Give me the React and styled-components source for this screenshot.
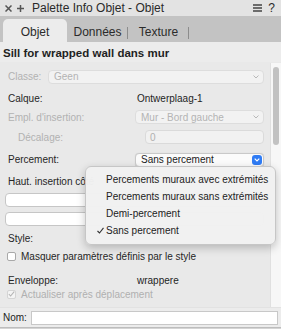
import styled, { createGlobalStyle } from 'styled-components';

const GlobalStyle = createGlobalStyle`
  html, body {
    margin: 0;
    padding: 0;
    background: #e9e9e9;
  }
  body {
    font-family: "Liberation Sans", Arial, sans-serif;
    color: #232323;
  }
`

const Panel = styled.div`
  width: 281px;
  height: 329px;
  display: flex;
  flex-direction: column;
  overflow: hidden;
  background: #e9e9e9;
`

const TitleBar = styled.div`
  height: 16px;
  display: flex;
  align-items: center;
  padding: 0 6px 0 5px;
  background: #e3e3e3;
  font-size: 12px;
  color: #2a2a2a;
  .btns {
    display: flex;
    gap: 5px;
    width: 27px;
    align-items: center;
  }
  .title {
    flex: 1;
  }
  .tools {
    display: flex;
    align-items: center;
    gap: 6px;
  }
`

const TabBar = styled.div`
  height: 26px;
  display: flex;
  align-items: flex-end;
  padding-left: 3px;
  background: #c3c3c3;
`

const Tab = styled.div`
  position: relative;
  width: ${(p) => (p.$active ? '64px' : '61px')};
  height: 23px;
  box-sizing: border-box;
  padding-top: 3px;
  display: flex;
  align-items: center;
  justify-content: center;
  font-size: 12px;
  color: #2b2b2b;
  background: ${(p) => (p.$active ? '#ececec' : 'transparent')};
  border-radius: 5px 5px 0 0;
  ${(p) => !p.$active && `
    &::after {
      content: '';
      position: absolute;
      right: 0;
      top: 8px;
      width: 1px;
      height: 12px;
      background: #8c8c8c;
    }
  `}
`

const Heading = styled.div`
  height: 20px;
  box-sizing: border-box;
  padding: 1px 0 0 3px;
  display: flex;
  align-items: center;
  background: #ececec;
  font-size: 11.5px;
  font-weight: bold;
  color: #1f1f1f;
`

const Content = styled.div`
  height: 245px;
  display: flex;
`

const Main = styled.div`
  flex: 1;
  display: flex;
  flex-direction: column;
  padding-top: 4px;
`

const Track = styled.div`
  width: 11px;
  margin-top: 1px;
  box-sizing: border-box;
  background: #f7f7f7;
  border-left: 1px solid #e0e0e0;
  padding: 4px 2px 0 2px;
`

const Thumb = styled.div`
  height: 78px;
  border-radius: 3px;
  background: #c2c2c2;
`

const Row = styled.div`
  position: relative;
  height: ${(p) => p.$h}px;
  display: flex;
  align-items: center;
  padding: 0 6px 0 ${(p) => p.$pl || 8}px;
  font-size: 10px;
`

const Label = styled.div`
  width: ${(p) => p.$w}px;
  flex-shrink: 0;
  white-space: nowrap;
  overflow: hidden;
  color: ${(p) => (p.$disabled ? '#b2b2b2' : '#262626')};
`

const Value = styled.div`
  padding-left: 2px;
  color: #1e1e1e;
`

const Popup = styled.div`
  flex: 1;
  height: 14px;
  box-sizing: border-box;
  display: flex;
  align-items: center;
  justify-content: space-between;
  padding: 0 1px 0 5px;
  border-radius: 4px;
  background: ${(p) => (p.$disabled ? '#f2f2f2' : '#fbfbfb')};
  border: 1px solid ${(p) => (p.$disabled ? '#dddddd' : '#c9c9c9')};
  color: ${(p) => (p.$disabled ? '#b4b4b4' : '#222')};
  box-shadow: ${(p) => (p.$disabled ? 'none' : '0 0.5px 1px rgba(0,0,0,0.12)')};
  .chev {
    margin-right: 3px;
  }
`

const BlueButton = styled.div`
  width: 10px;
  height: 10px;
  border-radius: 3px;
  background: #2f7cf5;
  display: flex;
  align-items: center;
  justify-content: center;
`

const Field = styled.div`
  flex: 1;
  height: 14px;
  box-sizing: border-box;
  display: flex;
  align-items: center;
  padding-left: 4px;
  border-radius: 4px;
  background: ${(p) => (p.$disabled ? '#f1f1f1' : '#ffffff')};
  border: 1px solid ${(p) => (p.$disabled ? '#dadada' : '#c6c6c6')};
  color: #b0b0b0;
`

const Check = styled.div`
  width: 9px;
  height: 9px;
  margin-right: 5px;
  box-sizing: border-box;
  border-radius: 2px;
  background: ${(p) => (p.$disabled ? '#f4f4f4' : '#ffffff')};
  border: 1px solid ${(p) => (p.$disabled ? '#d4d4d4' : '#a9a9a9')};
  display: flex;
  align-items: center;
  justify-content: center;
`

const CheckText = styled.div`
  color: ${(p) => (p.$disabled ? '#b0b0b0' : '#262626')};
`

const Menu = styled.div`
  position: absolute;
  top: 17px;
  left: 85px;
  width: 191px;
  height: 79px;
  box-sizing: border-box;
  padding-top: 4px;
  z-index: 5;
  background: rgba(241, 241, 241, 0.98);
  border: 1px solid #c6c6c6;
  border-radius: 6px;
  box-shadow: 0 3px 9px rgba(0, 0, 0, 0.22);
`

const MenuItem = styled.div`
  position: relative;
  height: 17px;
  display: flex;
  align-items: center;
  padding-left: 20px;
  font-size: 10px;
  color: #222;
  .tick {
    position: absolute;
    left: 11px;
    top: 5px;
  }
`

const NomBar = styled.div`
  height: 19px;
  display: flex;
  align-items: center;
  gap: 4px;
  padding: 0 3px;
  background: #ececec;
  font-size: 10px;
  border-top: 1px solid #e2e2e2;
`

const NomInput = styled.div`
  flex: 1;
  height: 14px;
  box-sizing: border-box;
  background: #fff;
  border: 1px solid #c8c8c8;
`

const BottomStrip = styled.div`
  flex: 1;
  background: #d4d4d4;
  border-top: 1px solid #bdbdbd;
`

const Chevron = ({ color = '#b8b8b8' }) => (
  <svg className="chev" width="6" height="4" viewBox="0 0 6 4">
    <polyline points="0.5,0.5 3,3 5.5,0.5" fill="none" stroke={color} strokeWidth="1" />
  </svg>
)

const menuItems = [
  'Percements muraux avec extrémités',
  'Percements muraux sans extrémités',
  'Demi-percement',
  'Sans percement',
]

const App = () => {
  return (
    <>
      <GlobalStyle />
      <Panel>
        <TitleBar>
          <div className='btns'>
            <svg width="7" height="7" viewBox="0 0 7 7">
              <path d="M0.5 0.5 L6.5 6.5 M6.5 0.5 L0.5 6.5" stroke="#555" strokeWidth="1.5" />
            </svg>
            <svg width="7" height="7" viewBox="0 0 7 7">
              <path d="M3.5 0 V7 M0 3.5 H7" stroke="#555" strokeWidth="1.5" />
            </svg>
          </div>
          <div className='title'>Palette Info Objet - Objet</div>
          <div className='tools'>
            <svg width="9" height="8" viewBox="0 0 9 8">
              <path d="M0 1 H9 M0 4 H9 M0 7 H9" stroke="#444" strokeWidth="1.3" />
            </svg>
            <span>?</span>
          </div>
        </TitleBar>
        <TabBar>
          <Tab $active>Objet</Tab>
          <Tab>Données</Tab>
          <Tab>Texture</Tab>
        </TabBar>
        <Heading>Sill for wrapped wall dans mur</Heading>
        <Content>
          <Main>
            <Row $h={21}>
              <Label $w={40} $disabled>Classe:</Label>
              <Popup $disabled>
                <span>Geen</span>
                <Chevron />
              </Popup>
            </Row>
            <Row $h={22}>
              <Label $w={127}>Calque:</Label>
              <Value>Ontwerplaag-1</Value>
            </Row>
            <Row $h={16}>
              <Label $w={127} $disabled>Empl. d'insertion:</Label>
              <Popup $disabled>
                <span>Mur - Bord gauche</span>
                <Chevron />
              </Popup>
            </Row>
            <Row $h={24} $pl={18}>
              <Label $w={127} $disabled>Décalage:</Label>
              <Field $disabled>0</Field>
            </Row>
            <Row $h={21}>
              <Label $w={127}>Percement:</Label>
              <Popup>
                <span>Sans percement</span>
                <BlueButton>
                  <svg width="6" height="4" viewBox="0 0 6 4">
                    <polyline points="0.7,0.7 3,3 5.3,0.7" fill="none" stroke="#fff" strokeWidth="1.2" />
                  </svg>
                </BlueButton>
              </Popup>
              <Menu>
                {menuItems.map((item) => (
                  <MenuItem key={item}>
                    {item === 'Sans percement' && (
                      <svg className='tick' width="7" height="7" viewBox="0 0 7 7">
                        <polyline points="0.5,4 2.5,6 6.5,0.8" fill="none" stroke="#333" strokeWidth="1.1" />
                      </svg>
                    )}
                    {item}
                  </MenuItem>
                ))}
              </Menu>
            </Row>
            <Row $h={22}>
              <Label $w={200}>Haut. insertion côté</Label>
            </Row>
            <Row $h={16} $pl={5}>
              <Field />
            </Row>
            <Row $h={21} $pl={5}>
              <Field />
            </Row>
            <Row $h={18}>
              <Label $w={40}>Style:</Label>
            </Row>
            <Row $h={18} $pl={7}>
              <Check />
              <CheckText>Masquer paramètres définis par le style</CheckText>
            </Row>
            <Row $h={8} />
            <Row $h={14}>
              <Label $w={127}>Enveloppe:</Label>
              <Value>wrappere</Value>
            </Row>
            <Row $h={14} $pl={7}>
              <Check $disabled>
                <svg width="7" height="6" viewBox="0 0 7 6">
                  <polyline points="0.8,3 2.6,5 6.2,0.6" fill="none" stroke="#b5b5b5" strokeWidth="1.1" />
                </svg>
              </Check>
              <CheckText $disabled>Actualiser après déplacement</CheckText>
            </Row>
          </Main>
          <Track>
            <Thumb />
          </Track>
        </Content>
        <NomBar>
          <span>Nom:</span>
          <NomInput />
        </NomBar>
        <BottomStrip />
      </Panel>
    </>
  )
}

export default App
